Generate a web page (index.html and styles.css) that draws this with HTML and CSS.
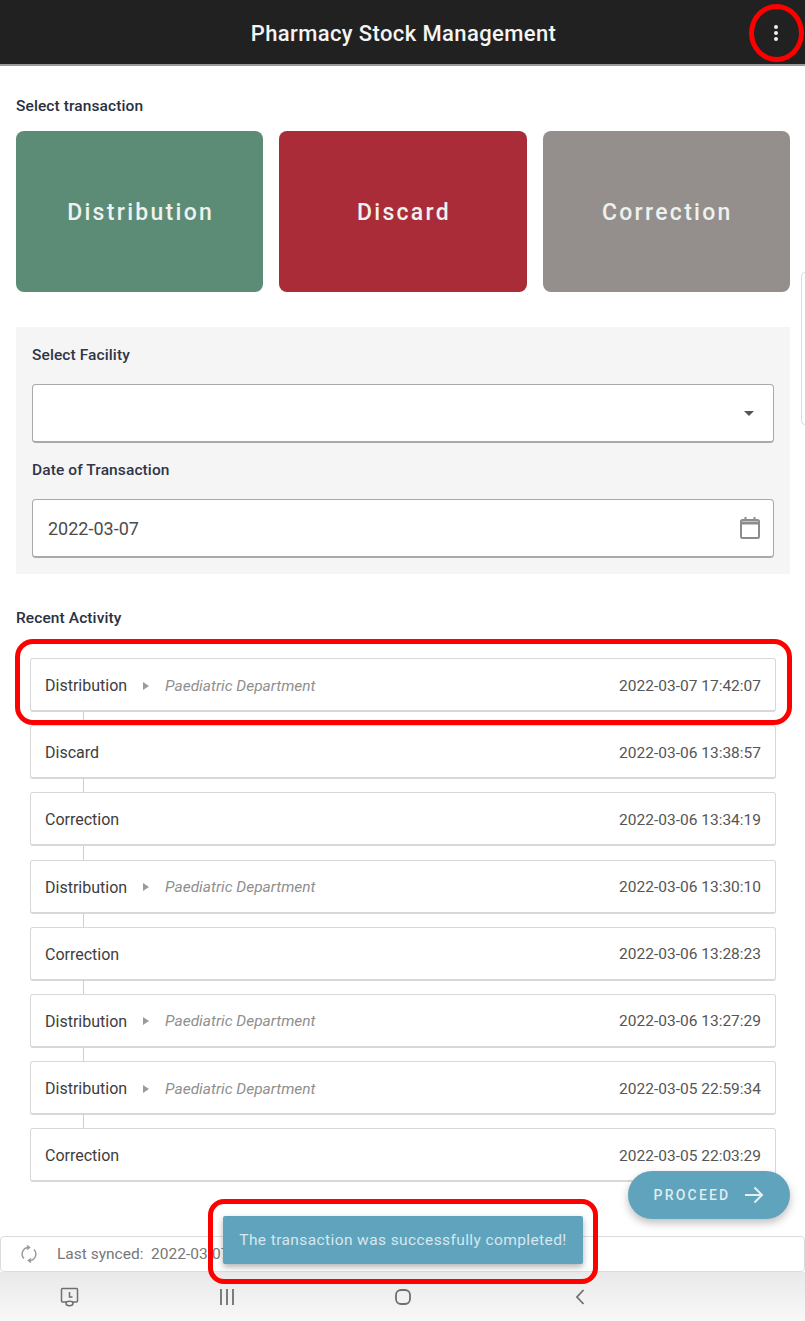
FILE: index.html
```html
<!DOCTYPE html>
<html lang="en">
<head>
    <meta charset="UTF-8">
    <title>Pharmacy Stock Management</title>
    <meta name="viewport" content="width=device-width, initial-scale=1">
    <link rel="stylesheet" href="styles.css">
</head>
<body>

<div class="app">
    <header class="topbar">
        <h1>Pharmacy Stock Management</h1>
        <svg class="menu-dots" width="6" height="18" viewBox="0 0 6 18"><circle cx="3" cy="3" r="2"/><circle cx="3" cy="9" r="2"/><circle cx="3" cy="15" r="2"/></svg>
    </header>

    <main class="content">
        <h2 class="section-title">Select transaction</h2>
        <div class="transactions">
            <div class="transaction green">Distribution</div>
            <div class="transaction red">Discard</div>
            <div class="transaction grey">Correction</div>
        </div>

        <section class="form-panel">
            <label class="field-label">Select Facility</label>
            <div class="field">
                <svg class="caret" width="10" height="5" viewBox="0 0 10 5"><path d="M0 0h10L5 5z"/></svg>
            </div>
            <label class="field-label second">Date of Transaction</label>
            <div class="field">
                <span>2022-03-07</span>
                <svg class="calendar" width="22" height="24" viewBox="0 0 22 24" fill="none" stroke="#8c8c8c" stroke-width="2"><rect x="2" y="4" width="18" height="18" rx="1.5"/><path d="M2 7h18" stroke-width="3"/><path d="M6.500 1v4M15.500 1v4"/></svg>
            </div>
        </section>

        <h2 class="section-title recent">Recent Activity</h2>
        <ul class="activity">
            <li><span class="kind">Distribution</span><svg class="arrow" width="6" height="8" viewBox="0 0 6 8"><path d="M0 0l6 4-6 4z"/></svg><em>Paediatric Department</em><time>2022-03-07 17:42:07</time></li>
            <li><span class="kind">Discard</span><time>2022-03-06 13:38:57</time></li>
            <li><span class="kind">Correction</span><time>2022-03-06 13:34:19</time></li>
            <li><span class="kind">Distribution</span><svg class="arrow" width="6" height="8" viewBox="0 0 6 8"><path d="M0 0l6 4-6 4z"/></svg><em>Paediatric Department</em><time>2022-03-06 13:30:10</time></li>
            <li><span class="kind">Correction</span><time>2022-03-06 13:28:23</time></li>
            <li><span class="kind">Distribution</span><svg class="arrow" width="6" height="8" viewBox="0 0 6 8"><path d="M0 0l6 4-6 4z"/></svg><em>Paediatric Department</em><time>2022-03-06 13:27:29</time></li>
            <li><span class="kind">Distribution</span><svg class="arrow" width="6" height="8" viewBox="0 0 6 8"><path d="M0 0l6 4-6 4z"/></svg><em>Paediatric Department</em><time>2022-03-05 22:59:34</time></li>
            <li><span class="kind">Correction</span><time>2022-03-05 22:03:29</time></li>
        </ul>
    </main>

    <footer class="bottom">
        <div class="sync-bar">
            <svg width="16" height="18" viewBox="0 0 16 18" fill="none" stroke="#9a9a9a" stroke-width="1.500"><path d="M3 13.500A6.500 6.500 0 0 1 8 2.500"/><path d="M13 4.500A6.500 6.500 0 0 1 8 15.500"/><path d="M6 0.500l2.500 2-2.500 2M10 13.500l-2.500 2 2.500 2"/></svg>
            <span>Last synced:&nbsp; 2022-03-07 17:42:07</span>
        </div>
        <nav class="nav-bar">
            <svg width="22" height="20" viewBox="0 0 22 20" fill="none" stroke="#6f6f6f" stroke-width="1.500"><path d="M8 15H3.500a1 1 0 0 1-1-1V2.500a1 1 0 0 1 1-1h14a1 1 0 0 1 1 1V14a1 1 0 0 1-1 1H13"/><ellipse cx="10.500" cy="16.500" rx="3.500" ry="2.200"/><path d="M10.500 5v5h3"/></svg>
            <svg width="16" height="16" viewBox="0 0 16 16" fill="none" stroke="#6f6f6f" stroke-width="1.800"><path d="M2 0v16M8 0v16M14 0v16"/></svg>
            <svg width="18" height="16" viewBox="0 0 18 16" fill="none" stroke="#6f6f6f" stroke-width="1.800"><rect x="2" y="1" width="14" height="14" rx="5"/></svg>
            <svg width="12" height="16" viewBox="0 0 12 16" fill="none" stroke="#6f6f6f" stroke-width="1.800"><path d="M9.500 1L3 8l6.500 7"/></svg>
        </nav>
    </footer>

    <div class="scroll-tab"></div>

    <button class="proceed">PROCEED
        <svg width="20" height="18" viewBox="0 0 20 18" fill="none" stroke="#e4f0f4" stroke-width="2"><path d="M1 9h17M10.500 1.500L18 9l-7.500 7.500"/></svg>
    </button>

    <div class="toast">The transaction was successfully completed!</div>

    <!-- red annotations drawn over the screenshot -->
    <div class="mark mark-menu"></div>
    <div class="mark mark-row"></div>
    <div class="mark mark-toast"></div>
</div>

</body>
</html>
```

FILE: styles.css
```css
/* Reset CSS */
* {
    box-sizing: border-box;
    margin: 0;
    padding: 0;
}

body {
    font-family: Roboto, 'Liberation Sans', Arial, sans-serif;
    background: #fff;
    color: #333;
}

.app {
    position: relative;
    display: flex;
    flex-direction: column;
    height: 1321px;
    overflow: hidden;
}

.topbar {
    position: relative;
    flex: none;
    height: 66px;
    padding: 2px 0 0 2px;
    display: flex;
    align-items: center;
    justify-content: center;
    background: #212121;
    border-bottom: 2px solid #9a9a9a;
    color: #f4f4f4;
}

.topbar h1 {
    font-size: 22px;
    font-weight: 500;
    letter-spacing: 0.38px;
}

.menu-dots {
    position: absolute;
    right: 26px;
    top: 24px;
    fill: #eee;
}

.content {
    flex: 1;
    padding: 32px 15px 0 16px;
}

.section-title {
    font-size: 15.500px;
    line-height: 16px;
    font-weight: 500;
    letter-spacing: 0.100px;
    color: #2b3040;
}

.transactions {
    display: flex;
    gap: 16px;
    margin-top: 17px;
}

.transaction {
    flex: 1;
    height: 161px;
    padding: 2px 0 0 2px;
    display: flex;
    align-items: center;
    justify-content: center;
    border-radius: 8px;
    font-size: 23px;
    font-weight: 500;
    letter-spacing: 2.300px;
    color: #eef2ee;
}

.green { background: #5c8c76; }
.red { background: #aa2c39; }
.grey { background: #948f8c; }

.form-panel {
    margin-top: 35px;
    padding: 20px 16px 16px;
    height: 247px;
    background: #f5f5f5;
}

.field-label {
    display: block;
    font-size: 15.500px;
    line-height: 16px;
    font-weight: 500;
    letter-spacing: 0.100px;
    color: #2f3648;
}

.field-label.second {
    margin-top: 19px;
}

.field {
    display: flex;
    align-items: center;
    justify-content: space-between;
    height: 59px;
    margin-top: 21px;
    padding: 0 12px 0 15px;
    background: #fff;
    border: 1px solid #a9a9a9;
    border-bottom-width: 2px;
    border-radius: 4px;
    font-size: 18px;
    color: #4c4c4c;
}

.field-label.second + .field {
    margin-top: 21px;
}

.caret {
    margin-left: auto;
    margin-right: 7px;
    fill: #555;
}

.recent {
    margin-top: 36px;
}

.activity {
    list-style: none;
    margin: 32px 14px 0;
}

.activity li {
    position: relative;
    display: flex;
    align-items: center;
    height: 54px;
    margin-bottom: 13.200px;
    padding: 2px 14px 0 14px;
    background: #fff;
    border: 1px solid #d8d8d8;
    border-bottom-width: 2px;
    border-radius: 3px;
    font-size: 15.500px;
}

/* line between two rows */
.activity li + li::before {
    content: "";
    position: absolute;
    left: 52px;
    top: -15px;
    width: 1px;
    height: 14px;
    background: #cfcfcf;
}

.kind {
    font-size: 16px;
    color: #3d3d3d;
}

.arrow {
    margin: 0 16px 0 16px;
    fill: #9b9b9b;
}

.activity em {
    color: #8f8f8f;
}

.activity time {
    margin-left: auto;
    font-size: 15.500px;
    color: #555;
}

.bottom {
    flex: none;
}

.sync-bar {
    display: flex;
    align-items: center;
    gap: 20px;
    height: 36px;
    padding-left: 20px;
    background: #fff;
    border: 1px solid #dcdcdc;
    border-radius: 4px;
    font-size: 15.500px;
    color: #777;
}

.nav-bar {
    height: 49px;
    display: grid;
    grid-template-columns: 140px 174px 178px 176px;
    justify-items: center;
    align-items: center;
    padding-top: 1px;
    background: linear-gradient(#e9e9e9, #f8f8f8);
}

.scroll-tab {
    position: absolute;
    right: -6px;
    top: 272px;
    width: 10px;
    height: 153px;
    border: 1px solid #dcdcdc;
    border-radius: 4px;
}

.proceed {
    position: absolute;
    left: 628px;
    top: 1171px;
    width: 162px;
    height: 48px;
    display: flex;
    align-items: center;
    justify-content: center;
    gap: 14px;
    border: none;
    border-radius: 24px;
    background: #5fa3bd;
    box-shadow: 0 4px 8px rgba(0,0,0,0.25);
    font-family: inherit;
    font-size: 14px;
    font-weight: 500;
    letter-spacing: 2.200px;
    color: #dfecf1;
}

.toast {
    position: absolute;
    left: 223px;
    top: 1216px;
    width: 360px;
    height: 48px;
    display: flex;
    align-items: center;
    justify-content: center;
    background: #5fa3bd;
    border-radius: 2px;
    box-shadow: 0 3px 6px rgba(0,0,0,0.3);
    font-size: 15.500px;
    letter-spacing: 0.400px;
    color: #d6e8ef;
}

.mark {
    position: absolute;
    border: 5px solid #f00;
}

.mark-menu {
    left: 749px;
    top: 4px;
    width: 55px;
    height: 58px;
    border-radius: 50%;
}

.mark-row {
    left: 15px;
    top: 639px;
    width: 777px;
    height: 86px;
    border-radius: 18px;
}

.mark-toast {
    left: 208px;
    top: 1199px;
    width: 390px;
    height: 85px;
    border-radius: 16px;
}
```
